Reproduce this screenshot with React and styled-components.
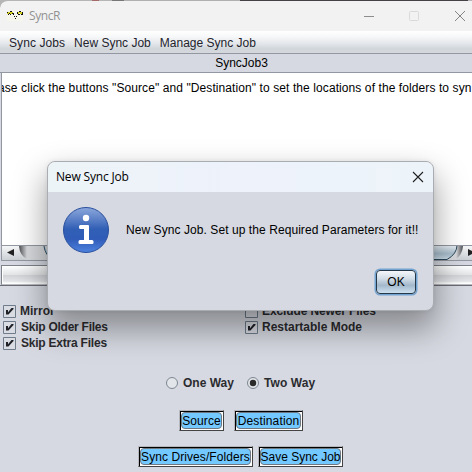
import React from 'react';
import styled, { createGlobalStyle } from 'styled-components';

const GlobalStyle = createGlobalStyle`
  *, *::before, *::after { box-sizing: border-box; }
  body { margin: 0; overflow: hidden; background: #d6d9df; }
  svg { display: block; }
`;

const Window = styled.main`
  position: relative;
  width: 472px;
  height: 472px;
  overflow: hidden;
  display: flex;
  flex-direction: column;
  background: #d6d9e1;
  color: #000;
  font: 12px/16px 'Liberation Sans', Arial, sans-serif;
`;

const Text = styled.span`
  white-space: pre;
  letter-spacing: ${(p) => p.$track || 0}px;
`;

const Backdrop = styled.div`
  flex: none;
  height: 31px;
  background: linear-gradient(90deg, #b5b5b5 0 92px, #a56b6b 92px 99px, #b5b5b5 99px 112px, #777 112px 124px, #b0b0b0 124px 240px, #454146 240px 468px, #b5b5b5 468px);
`;

const TitleBar = styled.header`
  height: 31px;
  display: flex;
  align-items: center;
  gap: 6px;
  padding: 0 6px 0 7px;
  border-top: 1px solid transparent;
  background: #f2f2f2;
  background-clip: padding-box;
  border-radius: 8px 0 0 0;
  color: #929292;
  font: 12px/16px 'Open Sans', 'Noto Sans', sans-serif;
`;

const WindowButtons = styled.div`
  display: flex;
  margin-left: auto;
`;

const MenuBar = styled.nav`
  flex: none;
  height: 23px;
  display: flex;
  gap: 9px;
  padding: 4px 9px 0;
  color: #23232c;
  background: linear-gradient(#fff, #f7f8f9 25%, #e2e5e9 60%, #d1d6da 80%, #d5d8dc);
  border-bottom: 1px solid #9297a1;
`;

const JobName = styled.div`
  flex: none;
  height: 19px;
  padding: 1px 0 0 11px;
  text-align: center;
  border-bottom: 1px solid #9297a1;
`;

const Log = styled.section`
  flex: none;
  height: 172px;
  margin-left: 1px;
  padding: 7px 0 0 0;
  overflow: hidden;
  background: #fff;
  border-left: 1px solid #9297a1;
  display: flex;
`;

const LogLine = styled(Text)`
  margin-left: -4px;
`;

const ScrollBar = styled.div`
  flex: none;
  height: 16px;
  margin-left: 1px;
  display: flex;
  justify-content: space-between;
  border: 1px solid #9297a1;
  border-right: 0;
  background: #d8dadd;
`;

const ProgressBar = styled.div`
  flex: none;
  height: 20px;
  margin: 4px 0 0 1px;
  border: 1px solid #7d828b;
  border-right: 0;
  border-bottom-color: #b9bcc2;
  box-shadow: inset 1px -1px #fff;
  background: linear-gradient(#fff 0, #f3f4f5 20%, #e3e5e7 48%, #d2d4d8 52%, #e3e5e9 85%, #fff 95%);
`;

const Divider = styled.div`
  flex: none;
  height: 1px;
  background: #6c6c75;
`;

const Options = styled.section`
  flex: none;
  height: 68px;
  display: grid;
  grid-template-columns: 242px 1fr;
  grid-auto-flow: column;
  grid-template-rows: repeat(3, 16px);
  padding: 17px 0 0 3px;
`;

const Choice = styled.label`
  display: flex;
  align-items: center;
  gap: ${(p) => p.$gap || 4}px;
  color: #2b2b2f;
  font-weight: bold;
`;

const Directions = styled.section`
  flex: none;
  height: 14px;
  display: flex;
  align-items: center;
  gap: 13px;
  margin: 22px 0 0 166px;
`;

const ButtonRow = styled.div`
  flex: none;
  display: flex;
  gap: ${(p) => p.$gap}px;
  margin: ${(p) => p.$top}px 0 0 ${(p) => p.$left}px;
`;

const BevelButton = styled.button`
  flex: none;
  width: ${(p) => p.$width}px;
  height: 21px;
  padding: 1px;
  display: flex;
  border: 1px solid;
  border-color: #b5b7bc #444 #444 #b5b7bc;
  background: #fff;
  box-shadow: inset 1px 1px #000;
  color: #000;
  font: inherit;
`;

const ButtonFace = styled.span`
  flex: 1;
  min-width: 0;
  height: 17px;
  display: flex;
  justify-content: center;
  align-items: center;
  border: 1px solid #6f7780;
  border-radius: 4px;
  background: #73c8ff;
`;

const Dialog = styled.section`
  position: absolute;
  left: 47px;
  top: 161px;
  width: 387px;
  height: 150px;
  display: flex;
  flex-direction: column;
  border: 1px solid #a9acb1;
  border-radius: 8px;
  background: #d6d9e1;
  overflow: hidden;
  box-shadow: 0 16px 32px 2px rgba(0, 0, 0, 0.37), 0 0 5px rgba(0, 0, 0, 0.07);
`;

const DialogTitle = styled.header`
  height: 30px;
  display: flex;
  justify-content: space-between;
  align-items: center;
  padding: 0 9px 0 8px;
  background: linear-gradient(90deg, #edf4f7, #edf2fb 50%, #edf4f9);
  font: 12px/16px 'Open Sans', 'Noto Sans', sans-serif;
`;

const DialogBody = styled.div`
  display: flex;
  align-items: center;
  gap: 17px;
  height: 46px;
  margin: 15px 0 0 15px;
`;

const OkButton = styled.button`
  width: 40px;
  height: 24px;
  margin: 17px 17px 0 auto;
  padding: 0;
  border: 1px solid #25384a;
  border-radius: 4px;
  background: linear-gradient(#f4f7fa, #d2dde7 35%, #a3b8cb 65%, #afc4d7 75%, #cde0f0);
  box-shadow: 0 0 0 1.5px #73a4d1;
  font: inherit;
  color: #000;
`;

const AppIcon = () => (
  <svg width="16" height="12" viewBox="0 0 16 12" shapeRendering="crispEdges">
    <path fill="#f7f6ec" d="M0 1h16v10H0z" />
    <path fill="#d3ce20" d="M1 2h5v1H1zM0 3h2v1H0zM3 3h2v1H3zM11 2h4v1h-4zM10 3h2v1h-2zM13 3h2v1h-2z" />
    <path fill="#111" d="M0 2h1v1H0zM3 1h2v1H3zM2 3h1v1H2zM1 4h1v1H1zM3 4h1v1H3zM5 3h2v1H5zM6 4h1v1H6zM10 2h1v2h-1zM12 1h2v1h-2zM15 2h1v2h-1zM11 4h2v1h-2zM14 4h2v1h-2zM7 6h1v1H7zM9 6h1v1H9zM8 8h1v1H8z" />
  </svg>
);

const CheckBox = ({ checked }) => (
  <svg width="13" height="13" viewBox="0 0 13 13">
    <path d="M.5 .5h12v12H.5z" fill="#e0e3e9" fillOpacity=".35" stroke="#6e7c8b" />
    {checked && <path d="M3 5h2v2.200L8.500 3H10.500v1L5.500 9.500H3z" fill="#202228" />}
  </svg>
);

const Radio = ({ checked }) => (
  <svg width="12" height="12" viewBox="0 0 12 12">
    <circle cx="6" cy="6" r="5.5" fill="#e2e5e9" stroke="#7c8791" />
    {checked && <circle cx="6" cy="6" r="3.2" fill="#2b2b2b" />}
  </svg>
);

const InfoIcon = () => (
  <svg width="46" height="46" viewBox="0 0 46 46">
    <defs>
      <linearGradient id="infoFill" x2="0" y2="1">
        <stop stopColor="#8ba8dc" />
        <stop offset=".25" stopColor="#5e82c8" />
        <stop offset=".48" stopColor="#315fb5" />
        <stop offset=".7" stopColor="#305cb8" />
        <stop offset="1" stopColor="#4e82df" />
      </linearGradient>
    </defs>
    <circle cx="23" cy="23" r="22.5" fill="url(#infoFill)" stroke="#294f9c" />
    <circle cx="23" cy="11" r="3.2" fill="#fff" />
    <path d="M17.500 18H25q1 0 1 1v14h3q1.500 0 1.500 1.500V36q0 1-1.500 1H17q-1.500 0-1.500-1v-1.500Q15.500 33 17 33h4V22h-3.500Q16 22 16 20.500v-1Q16 18 17.500 18z" fill="#fff" />
  </svg>
);

const ScrollLeft = () => (
  <svg width="60" height="14" viewBox="0 0 60 14">
    <defs>
      <linearGradient id="arrowFace" x2="0" y2="1"><stop stopColor="#f5f6f7" /><stop offset="1" stopColor="#cbd0d5" /></linearGradient>
      <linearGradient id="cupLeft"><stop stopColor="#4b4d50" /><stop offset="1" stopColor="#d8dadd" /></linearGradient>
    </defs>
    <path d="M0 0h17q0 10 7 14H0z" fill="url(#arrowFace)" />
    <path d="M17 0h8v13q-7-3-8-13z" fill="url(#cupLeft)" />
    <path d="M12 3v7L5 6.500z" fill="#222" />
    <path d="M42 0q1 9 9 14" fill="#b8cbd6" stroke="#31546b" />
  </svg>
);

const ScrollRight = () => (
  <svg width="60" height="14" viewBox="0 0 60 14">
    <defs>
      <linearGradient id="thumb" x2="0" y2="1"><stop stopColor="#edf3f7" /><stop offset=".6" stopColor="#a9bfce" /><stop offset="1" stopColor="#cfe0eb" /></linearGradient>
      <linearGradient id="cupRight"><stop stopColor="#d8dadd" /><stop offset="1" stopColor="#4b4d50" /></linearGradient>
    </defs>
    <path d="M51 0h9v14H44q7-4 7-14z" fill="url(#arrowFace)" />
    <path d="M45 0h6q-1 9-7 13z" fill="url(#cupRight)" />
    <path d="M-2 -1h47q0 9-10 14.500H-2z" fill="url(#thumb)" stroke="#2c485b" />
    <path d="M56 3v7l7-3.500z" fill="#222" />
  </svg>
);

const Option = ({ children, checked, track, gap = 4 }) => (
  <Choice $gap={gap}><CheckBox checked={checked} /><Text $track={track}>{children}</Text></Choice>
);

const FramedButton = ({ children, width, track }) => (
  <BevelButton $width={width}><ButtonFace><Text $track={track}>{children}</Text></ButtonFace></BevelButton>
);

export default function App() {
  return (
    <Window>
      <GlobalStyle />
      <Backdrop>
        <TitleBar>
          <AppIcon />
          <Text $track={-0.4}>SyncR</Text>
          <WindowButtons>
            <svg width="102" height="12" viewBox="0 0 102 12" fill="none">
              <path d="M0 6.500h10" stroke="#8d8d8d" />
              <rect x="45.500" y="1.500" width="9" height="9" rx="1" stroke="#dadada" />
              <path d="M91 1l10 10M101 1L91 11" stroke="#858585" />
            </svg>
          </WindowButtons>
        </TitleBar>
      </Backdrop>
      <MenuBar>
        <Text $track={0.08}>Sync Jobs</Text>
        <Text>New Sync Job</Text>
        <Text>Manage Sync Job</Text>
      </MenuBar>
      <JobName><Text>SyncJob3</Text></JobName>
      <Log>
        <LogLine $track={0.09}>ase click the buttons "Source" and "Destination" to set the locations of the folders to syn</LogLine>
      </Log>
      <ScrollBar><ScrollLeft /><ScrollRight /></ScrollBar>
      <ProgressBar />
      <Divider />
      <Options>
        <Option checked>Mirror</Option>
        <Option checked gap={5} track={-0.25}>Skip Older Files</Option>
        <Option checked gap={5} track={-0.22}>Skip Extra Files</Option>
        <Option track={-0.12}>Exclude Newer Files</Option>
        <Option checked>Restartable Mode</Option>
      </Options>
      <Directions>
        <Choice $gap={5}><Radio /><Text>One Way</Text></Choice>
        <Choice $gap={5}><Radio checked /><Text $track={0.12}>Two Way</Text></Choice>
      </Directions>
      <ButtonRow $left={179} $top={20} $gap={10}>
        <FramedButton width={45} track={0.1}>Source</FramedButton>
        <FramedButton width={69} track={0.15}>Destination</FramedButton>
      </ButtonRow>
      <ButtonRow $left={138} $top={15} $gap={5}>
        <FramedButton width={115} track={0.08}>Sync Drives/Folders</FramedButton>
        <FramedButton width={85}>Save Sync Job</FramedButton>
      </ButtonRow>
      <Dialog>
        <DialogTitle>
          <Text $track={-0.17}>New Sync Job</Text>
          <svg width="12" height="12" viewBox="0 0 12 12"><path d="M1 1l10 10M11 1L1 11" stroke="#202020" strokeWidth="1.100" /></svg>
        </DialogTitle>
        <DialogBody>
          <InfoIcon />
          <Text $track={0.07}>New Sync Job. Set up the Required Parameters for it!!</Text>
        </DialogBody>
        <OkButton>OK</OkButton>
      </Dialog>
    </Window>
  );
}
